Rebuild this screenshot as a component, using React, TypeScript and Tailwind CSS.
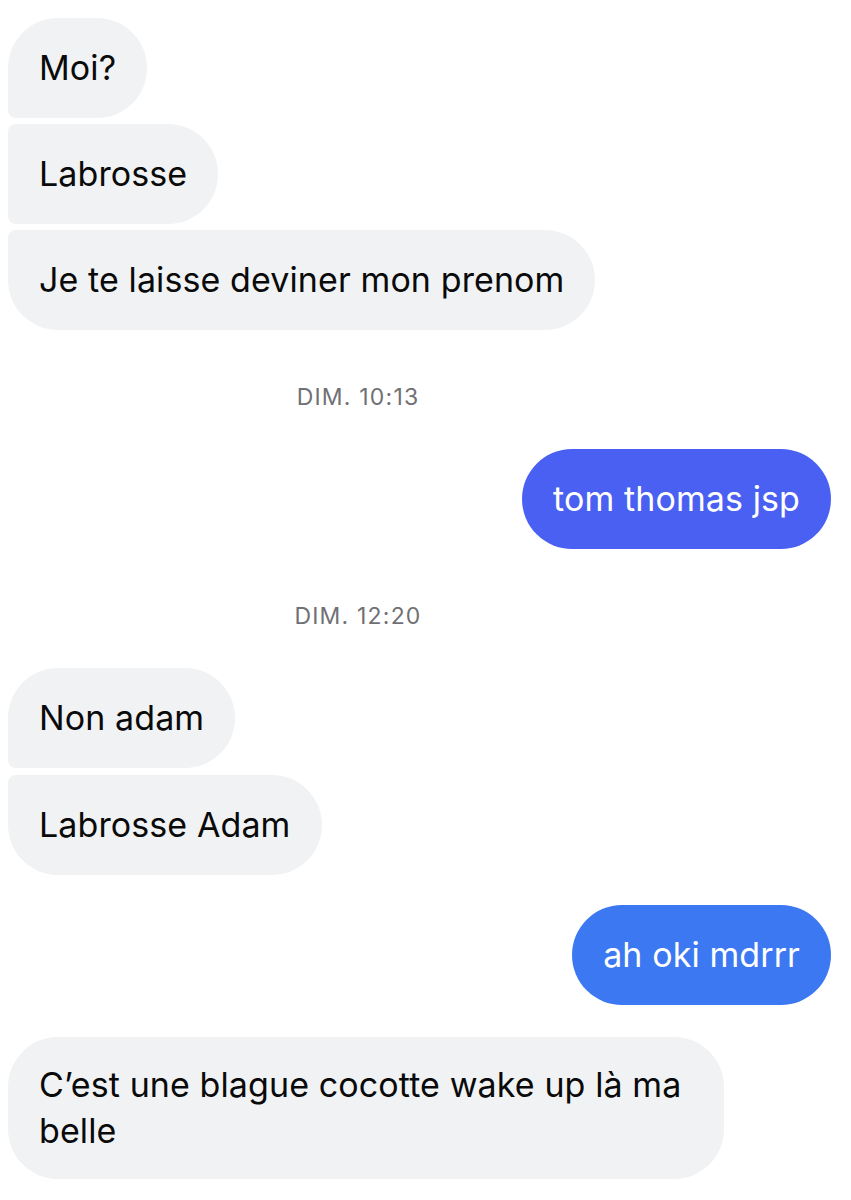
import React from "react";

type Side = "in" | "out";

interface BubbleProps {
  text: string;
  side: Side;
  shape: string;
  color?: string;
  className?: string;
}

function Bubble({ text, side, shape, color, className = "" }: BubbleProps) {
  const base =
    side === "in"
      ? "bg-[#f1f2f4] text-[#0a0a0a] self-start ml-[8px]"
      : `${color} text-white self-end mr-[20px]`;
  return (
    <div
      className={`${base} ${shape} ${className} px-[31px] py-[27px] text-[34px] leading-[46px] tracking-[0.1px] max-w-[716px]`}
    >
      {text}
    </div>
  );
}

function Stamp({ label, className = "" }: { label: string; className?: string }) {
  return (
    <div
      className={`w-[716px] text-center text-[23px] leading-[28px] text-[#707075] tracking-[1.2px] ${className}`}
    >
      {label}
    </div>
  );
}

export default function App() {
  return (
    <div
      className="w-[851px] h-[1200px] bg-white flex flex-col pt-[18px] overflow-hidden"
      style={{ fontFamily: "Inter, 'Noto Sans', sans-serif" }}
    >
      <Bubble text="Moi?" side="in" shape="rounded-[50px] rounded-bl-[8px]" />
      <Bubble
        text="Labrosse"
        side="in"
        shape="rounded-[50px] rounded-tl-[8px] rounded-bl-[8px]"
        className="mt-[6px]"
      />
      <Bubble
        text="Je te laisse deviner mon prenom"
        side="in"
        shape="rounded-[50px] rounded-tl-[8px]"
        className="mt-[6px]"
      />

      <Stamp label="DIM. 10:13" className="mt-[53px]" />

      <Bubble
        text="tom thomas jsp"
        side="out"
        color="bg-[#4a60f2]"
        shape="rounded-[50px]"
        className="mt-[38px]"
      />

      <Stamp label="DIM. 12:20" className="mt-[53px]" />

      <Bubble
        text="Non adam"
        side="in"
        shape="rounded-[50px] rounded-bl-[8px]"
        className="mt-[38px]"
      />
      <Bubble
        text="Labrosse Adam"
        side="in"
        shape="rounded-[50px] rounded-tl-[8px]"
        className="mt-[7px]"
      />

      <Bubble
        text="ah oki mdrrr"
        side="out"
        color="bg-[#3c78f1]"
        shape="rounded-[50px]"
        className="mt-[30px]"
      />

      <Bubble
        text="C’est une blague cocotte wake up là ma belle"
        side="in"
        shape="rounded-[50px] !py-[25px] w-[716px]"
        className="mt-[32px]"
      />
    </div>
  );
}
